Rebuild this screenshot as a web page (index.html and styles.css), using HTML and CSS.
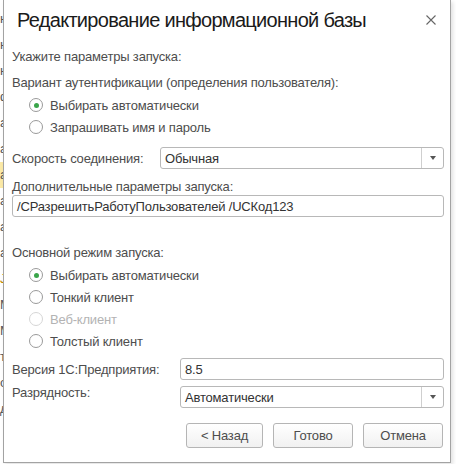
FILE: index.html
```html
<!DOCTYPE html>
<html lang="ru">
<head>
    <meta charset="UTF-8">
    <meta name="viewport" content="width=device-width, initial-scale=1.0">
    <title>Редактирование информационной базы</title>
    <link rel="stylesheet" href="styles.css">
</head>
<body>
    <!-- list of infobases behind the modal -->
    <ul class="backdrop">
        <li>н</li>
        <li>н</li>
        <li>н</li>
        <li>ф</li>
        <li>а</li>
        <li>а</li>
        <li class="current">а</li>
        <li>а</li>
        <li>а</li>
        <li>а</li>
        <li class="warn">J</li>
        <li>M</li>
        <li>M</li>
        <li>т</li>
        <li>о</li>
        <li>д</li>
    </ul>

    <div class="dialog">
        <div class="dialog-header">
            <h1 class="dialog-title">Редактирование информационной базы</h1>
            <button class="close-button" type="button">
                <svg width="10" height="10" viewBox="0 0 10 10">
                    <path d="M0.5 0.5 L9.5 9.5 M9.5 0.5 L0.5 9.5" stroke="#666" stroke-width="1.1" fill="none"/>
                </svg>
            </button>
        </div>

        <div class="text-line hint">Укажите параметры запуска:</div>
        <div class="text-line">Вариант аутентификации (определения пользователя):</div>
        <div class="radio-group">
            <label class="radio checked"><span class="radio-mark"></span>Выбирать автоматически</label>
            <label class="radio"><span class="radio-mark"></span>Запрашивать имя и пароль</label>
        </div>

        <div class="field-row speed-row">
            <span class="field-label speed-label">Скорость соединения:</span>
            <div class="select">
                <span class="select-value">Обычная</span>
                <span class="select-button"><span class="arrow"></span></span>
            </div>
        </div>

        <div class="text-line small-label">Дополнительные параметры запуска:</div>
        <div class="input">/СРазрешитьРаботуПользователей /UCКод123</div>

        <div class="text-line mode-label">Основной режим запуска:</div>
        <div class="radio-group">
            <label class="radio checked"><span class="radio-mark"></span>Выбирать автоматически</label>
            <label class="radio"><span class="radio-mark"></span>Тонкий клиент</label>
            <label class="radio disabled"><span class="radio-mark"></span>Веб-клиент</label>
            <label class="radio"><span class="radio-mark"></span>Толстый клиент</label>
        </div>

        <div class="field-row version-row">
            <span class="field-label version-label">Версия 1С:Предприятия:</span>
            <div class="input">8.5</div>
        </div>

        <div class="field-row bits-row">
            <span class="field-label version-label top-label">Разрядность:</span>
            <div class="select">
                <span class="select-value">Автоматически</span>
                <span class="select-button"><span class="arrow"></span></span>
            </div>
        </div>

        <div class="buttons">
            <button class="btn btn-back" type="button">&lt; Назад</button>
            <button class="btn" type="button">Готово</button>
            <button class="btn" type="button">Отмена</button>
        </div>
    </div>
</body>
</html>
```

FILE: styles.css
```css
body {
    margin: 0;
    width: 456px;
    height: 464px;
    overflow: hidden;
    position: relative;
    background-color: #ffffff;
    font-family: "Liberation Sans", Arial, sans-serif;
    font-size: 13px;
    letter-spacing: -0.18px;
    color: #4d4d4d;
}

.backdrop {
    list-style: none;
    margin: 0;
    padding: 6px 0 0 0;
    width: 10px;
    color: #555;
    font-size: 13px;
}

.backdrop li {
    height: 26px;
    line-height: 26px;
}

.backdrop li.current {
    background-color: #fbe9a6;
}

.backdrop li.warn {
    color: #c28a00;
}

/* modal window */
.dialog {
    position: absolute;
    left: 3px;
    top: 0;
    width: 448px;
    height: 463px;
    box-sizing: border-box;
    background-color: #fff;
    border: 1px solid #a3a3a3;
    border-top: none;
    padding: 0 6px 0 8px;
    box-shadow: 2px 2px 4px rgba(0, 0, 0, 0.12);
}

.dialog-header {
    height: 40px;
    display: flex;
    align-items: center;
    justify-content: space-between;
}

.dialog-title {
    margin: 0 0 0 5px;
    font-size: 20px;
    font-weight: normal;
    color: #1a1a1a;
    letter-spacing: -0.7px;
}

.close-button {
    border: none;
    background: none;
    padding: 0;
    width: 10px;
    height: 10px;
    margin-right: 8px;
    display: flex;
}

.text-line {
    height: 22px;
    line-height: 22px;
    white-space: nowrap;
}

.hint {
    margin-top: 6px;
    margin-bottom: 4px;
}

.radio-group {
    display: flex;
    flex-direction: column;
}

.radio {
    height: 22px;
    display: flex;
    align-items: center;
    padding-left: 17px;
    gap: 7px;
    color: #4d4d4d;
}

.radio-mark {
    width: 14px;
    height: 14px;
    box-sizing: border-box;
    border: 1px solid #9a9a9a;
    border-radius: 50%;
    display: flex;
    align-items: center;
    justify-content: center;
    background: #fff;
}

.radio.checked .radio-mark::after {
    content: "";
    width: 5px;
    height: 5px;
    border-radius: 50%;
    background-color: #3aa54a;
}

.radio.disabled {
    color: #b3b3b3;
}

.radio.disabled .radio-mark {
    border-color: #d6d6d6;
}

.field-row {
    display: flex;
    align-items: center;
}

.field-label {
    flex: none;
    white-space: nowrap;
}

.speed-row {
    margin-top: 9px;
}

.speed-label {
    width: 148px;
}

.version-label {
    width: 168px;
}

.select,
.input {
    flex: 1;
    height: 22px;
    box-sizing: border-box;
    border: 1px solid #b8b8b8;
    border-radius: 3px;
    background-color: #fff;
    color: #333;
    display: flex;
    align-items: center;
    white-space: nowrap;
}

.input {
    padding-left: 4px;
}

.select-value {
    flex: 1;
    padding-left: 4px;
}

.select-button {
    width: 21px;
    height: 100%;
    border-left: 1px solid #cfcfcf;
    display: flex;
    align-items: center;
    justify-content: center;
}

.arrow {
    width: 0;
    height: 0;
    border-left: 3px solid transparent;
    border-right: 3px solid transparent;
    border-top: 4px solid #555;
}

.small-label {
    height: 16px;
    line-height: 16px;
    margin-top: 10px;
}

.mode-label {
    margin-top: 25px;
}

.version-row {
    margin-top: 6px;
}

.bits-row {
    margin-top: 6px;
    align-items: flex-start;
}

.top-label {
    line-height: 13px;
}

.buttons {
    margin-top: 15px;
    display: flex;
    justify-content: flex-end;
    gap: 10px;
    padding-right: 1px;
}

.btn {
    width: 80px;
    height: 25px;
    border: 1px solid #b5b5b5;
    border-radius: 3px;
    background: linear-gradient(#ffffff, #f1f1f1);
    font-family: "Liberation Sans", Arial, sans-serif;
    font-size: 13px;
    letter-spacing: -0.18px;
    color: #4d4d4d;
    padding: 0;
}

.btn-back {
    width: 77px;
}
```
